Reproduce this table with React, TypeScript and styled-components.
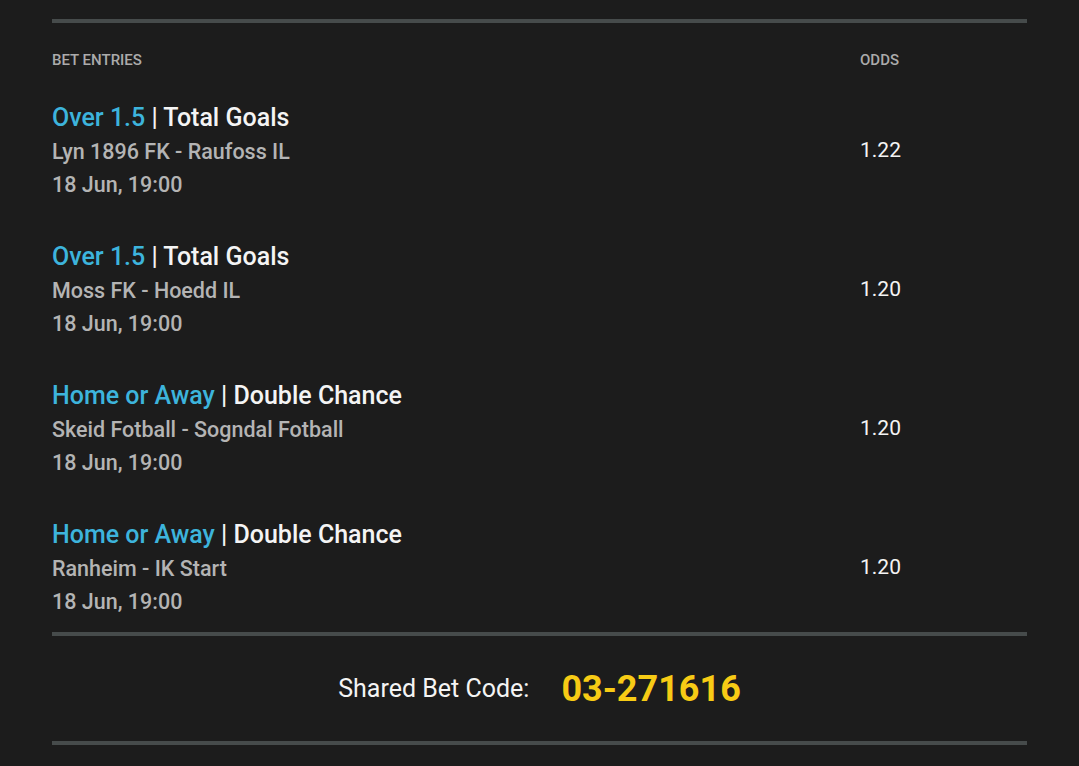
import * as React from "react";
import styled, { createGlobalStyle } from "styled-components";

const Global = createGlobalStyle`
  html, body {
    margin: 0;
    background: #1c1c1c;
  }
  body {
    font-family: Roboto, "Liberation Sans", sans-serif;
  }
`;

const Page = styled.div`
  padding: 19px 52px 21px 52px;
`;

const Rule = styled.div`
  height: 4px;
  background: #464b4b;
`;

const Header = styled.div`
  display: flex;
  margin-top: 27px;
  margin-bottom: 31px;
  font-size: 15px;
  font-weight: 500;
  line-height: 20px;
  color: #ababab;
  text-transform: uppercase;
  span:first-child {
    width: 808px;
  }
`;

const Entry = styled.div`
  display: flex;
  align-items: center;
  & + & {
    margin-top: 39px;
  }
  &:last-child {
    margin-bottom: 14px;
  }
`;

const Info = styled.div`
  width: 808px;
  display: flex;
  flex-direction: column;
`;

const Title = styled.div`
  font-size: 25px;
  font-weight: 500;
  line-height: 34px;
  color: #f4f4f4;
  em {
    font-style: normal;
    color: #3db4dc;
  }
`;

const Sub = styled.div`
  font-size: 21.5px;
  font-weight: 500;
  line-height: 33px;
  color: #b4b4b4;
`;

const Odds = styled.div`
  font-size: 21px;
  margin-bottom: 2px;
  color: #f4f4f4;
`;

const Footer = styled.div`
  height: 105px;
  display: flex;
  align-items: center;
  justify-content: center;
  gap: 32px;
`;

const Label = styled.span`
  font-size: 25px;
  color: #f4f4f4;
`;

const Code = styled.span`
  font-size: 36px;
  font-weight: 700;
  color: #f7cb15;
`;

const entries = [
  { pick: "Over 1.5", market: "Total Goals", match: "Lyn 1896 FK - Raufoss IL", odds: "1.22" },
  { pick: "Over 1.5", market: "Total Goals", match: "Moss FK - Hoedd IL", odds: "1.20" },
  { pick: "Home or Away", market: "Double Chance", match: "Skeid Fotball - Sogndal Fotball", odds: "1.20" },
  { pick: "Home or Away", market: "Double Chance", match: "Ranheim - IK Start", odds: "1.20" },
];

const App: React.FC = () => (
  <>
    <Global />
    <Page>
      <Rule />
      <Header>
        <span>Bet Entries</span>
        <span>Odds</span>
      </Header>
      <div>
        {entries.map((e, i) => (
          <Entry key={i}>
            <Info>
              <Title>
                <em>{e.pick}</em> | {e.market}
              </Title>
              <Sub>{e.match}</Sub>
              <Sub>18 Jun, 19:00</Sub>
            </Info>
            <Odds>{e.odds}</Odds>
          </Entry>
        ))}
      </div>
      <Rule />
      <Footer>
        <Label>Shared Bet Code:</Label>
        <Code>03-271616</Code>
      </Footer>
      <Rule />
    </Page>
  </>
);

export default App;
